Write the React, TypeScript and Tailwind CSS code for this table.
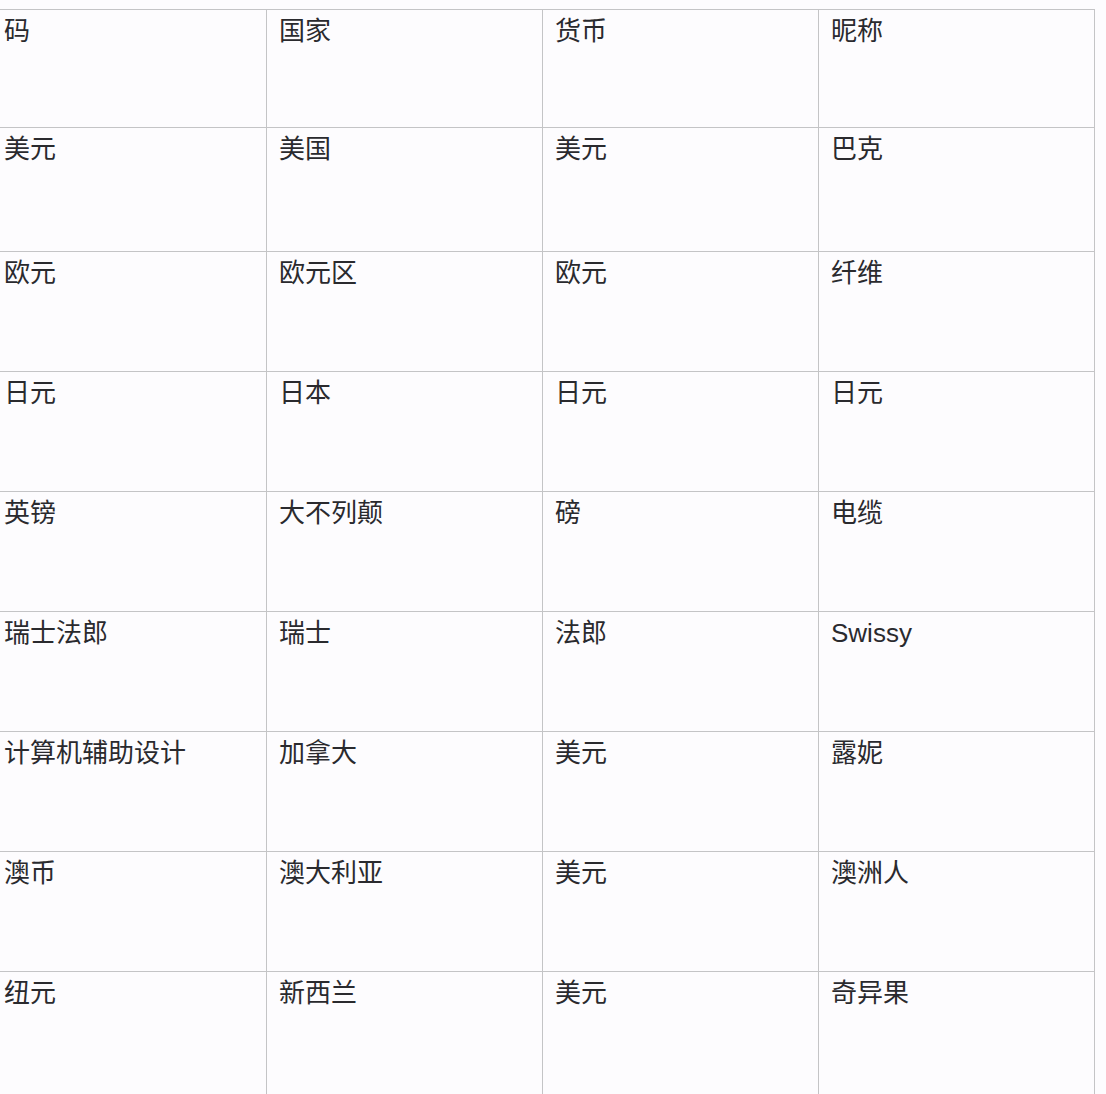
const rows: [string, string, string, string][] = [
  ['码', '国家', '货币', '昵称'],
  ['美元', '美国', '美元', '巴克'],
  ['欧元', '欧元区', '欧元', '纤维'],
  ['日元', '日本', '日元', '日元'],
  ['英镑', '大不列颠', '磅', '电缆'],
  ['瑞士法郎', '瑞士', '法郎', 'Swissy'],
  ['计算机辅助设计', '加拿大', '美元', '露妮'],
  ['澳币', '澳大利亚', '美元', '澳洲人'],
  ['纽元', '新西兰', '美元', '奇异果'],
];

// row heights measured from the screenshot
const heights = ['h-[117px]', 'h-[124px]', 'h-[120px]', 'h-[120px]', 'h-[120px]', 'h-[120px]', 'h-[120px]', 'h-[120px]', 'h-[140px]'];

export default function App() {
  return (
    <div className="w-[1106px] h-[1094px] overflow-hidden bg-[#fdfcfe] pt-[9px]">
      <div className="ml-[-10px] w-[1105px] border-t border-r border-[#c4c4c6] font-['Liberation_Sans','Noto_Sans_CJK_SC',sans-serif] text-[26px] leading-[39px] text-[#2a2a2e]">
        {rows.map((row, i) => (
          <div key={i} className={`grid grid-cols-[276px_276px_276px_276px] ${heights[i]} ${i > 0 ? 'border-t border-[#c4c4c6]' : ''}`}>
            {row.map((cell, j) => (
              <div key={j} className={`pt-[2px] ${j > 0 ? 'pl-[12px] border-l border-[#c4c4c6]' : 'pl-[14px]'}`}>
                {cell}
              </div>
            ))}
          </div>
        ))}
      </div>
    </div>
  );
}
